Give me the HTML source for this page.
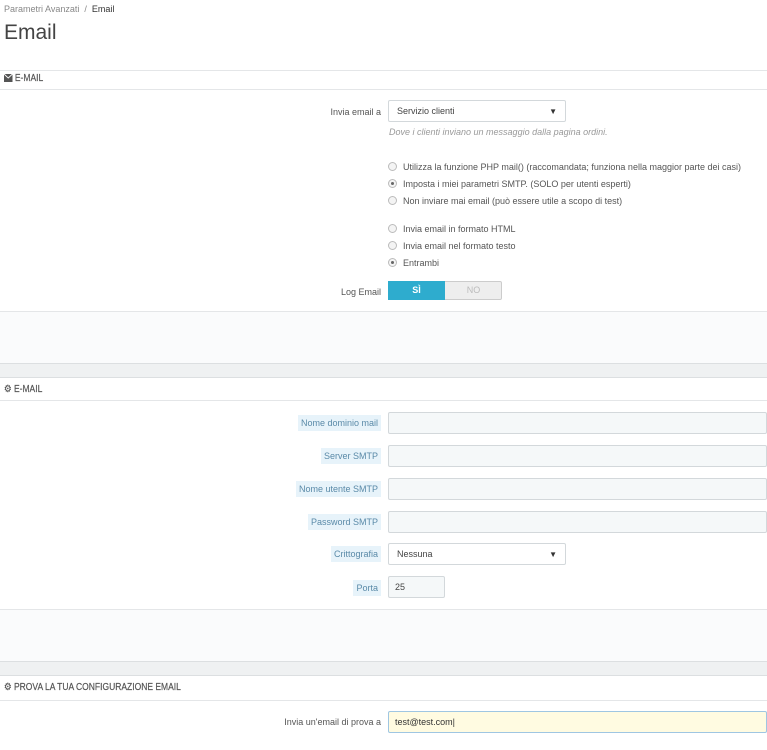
<!DOCTYPE html>
<html><head><meta charset="utf-8"><style>
*{margin:0;padding:0;box-sizing:border-box}
body{width:767px;height:750px;background:#fff;font-family:"Liberation Sans",sans-serif;color:#555;font-size:9px;position:relative;overflow:hidden}
.a{position:absolute}
.hl{position:absolute;left:0;width:767px;height:1px;background:#e4e6e8}
.lbl{position:absolute;right:386px;white-space:nowrap}
.tag{background:#e7f3fa;color:#5a8aa8;padding:3px 3px}
.inp{position:absolute;left:388px;height:22px;border:1px solid #d3d8db;background:#f5f8f9;border-radius:2px}
.sel{position:absolute;left:388px;width:178px;height:22px;border:1px solid #d3d8db;background:#fff;border-radius:2px;padding:5px 8px;color:#444}
.sel:after{content:"▼";position:absolute;right:8px;top:6px;font-size:8px;color:#333}
.r{position:absolute;left:388px;width:9px;height:9px;border:1px solid #bbb;border-radius:50%;background:#f4f4f4}
.r.on:after{content:"";position:absolute;left:2px;top:2px;width:3px;height:3px;border-radius:50%;background:#666}
.rt{position:absolute;left:403px;color:#555}
.hd{position:absolute;left:4px;font-size:10px;color:#555;transform:scaleX(.85);transform-origin:left;-webkit-text-stroke:.2px #555}
</style></head><body>
<div class="a" style="left:4px;top:4px;color:#888">Parametri Avanzati &nbsp;/&nbsp; <span style="color:#333">Email</span></div>
<div class="a" style="left:4px;top:21px;font-size:21px;color:#444">Email</div>

<div class="hl" style="top:70px"></div>
<div class="hd" style="top:73px"><svg width="10" height="8" viewBox="0 0 10 8" style="vertical-align:-1px"><rect width="10" height="8" fill="#555"/><path d="M0 0L5 4L10 0" stroke="#fff" fill="none" stroke-width="1"/></svg> E-MAIL</div>
<div class="hl" style="top:89px"></div>

<div class="lbl" style="top:107px">Invia email a</div>
<div class="sel" style="top:100px">Servizio clienti</div>
<div class="a" style="left:389px;top:127px;font-style:italic;color:#999">Dove i clienti inviano un messaggio dalla pagina ordini.</div>

<div class="r" style="top:162px"></div><div class="rt" style="top:162px">Utilizza la funzione PHP mail() (raccomandata; funziona nella maggior parte dei casi)</div>
<div class="r on" style="top:179px"></div><div class="rt" style="top:179px">Imposta i miei parametri SMTP. (SOLO per utenti esperti)</div>
<div class="r" style="top:196px"></div><div class="rt" style="top:196px">Non inviare mai email (può essere utile a scopo di test)</div>
<div class="r" style="top:224px"></div><div class="rt" style="top:224px">Invia email in formato HTML</div>
<div class="r" style="top:241px"></div><div class="rt" style="top:241px">Invia email nel formato testo</div>
<div class="r on" style="top:258px"></div><div class="rt" style="top:258px">Entrambi</div>

<div class="lbl" style="top:287px">Log Email</div>
<div class="a" style="left:388px;top:281px;width:114px;height:19px;border:1px solid #ccc;background:#eee;border-radius:2px"></div>
<div class="a" style="left:388px;top:281px;width:57px;height:19px;background:#2eacce;color:#fff;text-align:center;line-height:19px;font-weight:bold">SÌ</div>
<div class="a" style="left:445px;top:281px;width:57px;height:19px;color:#bbb;text-align:center;line-height:19px">NO</div>

<div class="a" style="left:0;top:311px;width:767px;height:52px;background:#fafbfc"></div>
<div class="hl" style="top:311px"></div>
<div class="a" style="left:0;top:363px;width:767px;height:15px;background:#eff1f2;border-top:1px solid #dcdfe1;border-bottom:1px solid #dcdfe1"></div>

<div class="hd" style="top:384px">⚙ E-MAIL</div>
<div class="hl" style="top:400px"></div>

<div class="lbl" style="top:418px"><span class="tag">Nome dominio mail</span></div>
<div class="inp" style="top:412px;width:379px"></div>
<div class="lbl" style="top:451px"><span class="tag">Server SMTP</span></div>
<div class="inp" style="top:445px;width:379px"></div>
<div class="lbl" style="top:484px"><span class="tag">Nome utente SMTP</span></div>
<div class="inp" style="top:478px;width:379px"></div>
<div class="lbl" style="top:517px"><span class="tag">Password SMTP</span></div>
<div class="inp" style="top:511px;width:379px"></div>
<div class="lbl" style="top:549px"><span class="tag">Crittografia</span></div>
<div class="sel" style="top:543px">Nessuna</div>
<div class="lbl" style="top:583px"><span class="tag">Porta</span></div>
<div class="inp" style="top:576px;width:57px;padding:5px 6px;color:#444">25</div>

<div class="a" style="left:0;top:609px;width:767px;height:52px;background:#fafbfc"></div>
<div class="hl" style="top:609px"></div>
<div class="a" style="left:0;top:661px;width:767px;height:15px;background:#eff1f2;border-top:1px solid #dcdfe1;border-bottom:1px solid #dcdfe1"></div>

<div class="hd" style="top:682px">⚙ PROVA LA TUA CONFIGURAZIONE EMAIL</div>
<div class="hl" style="top:700px"></div>

<div class="lbl" style="top:717px">Invia un'email di prova a</div>
<div class="inp" style="top:711px;width:379px;background:#fffbe1;border-color:#9fc6e2;padding:5px 6px;color:#333">test@test.com|</div>
</body></html>
